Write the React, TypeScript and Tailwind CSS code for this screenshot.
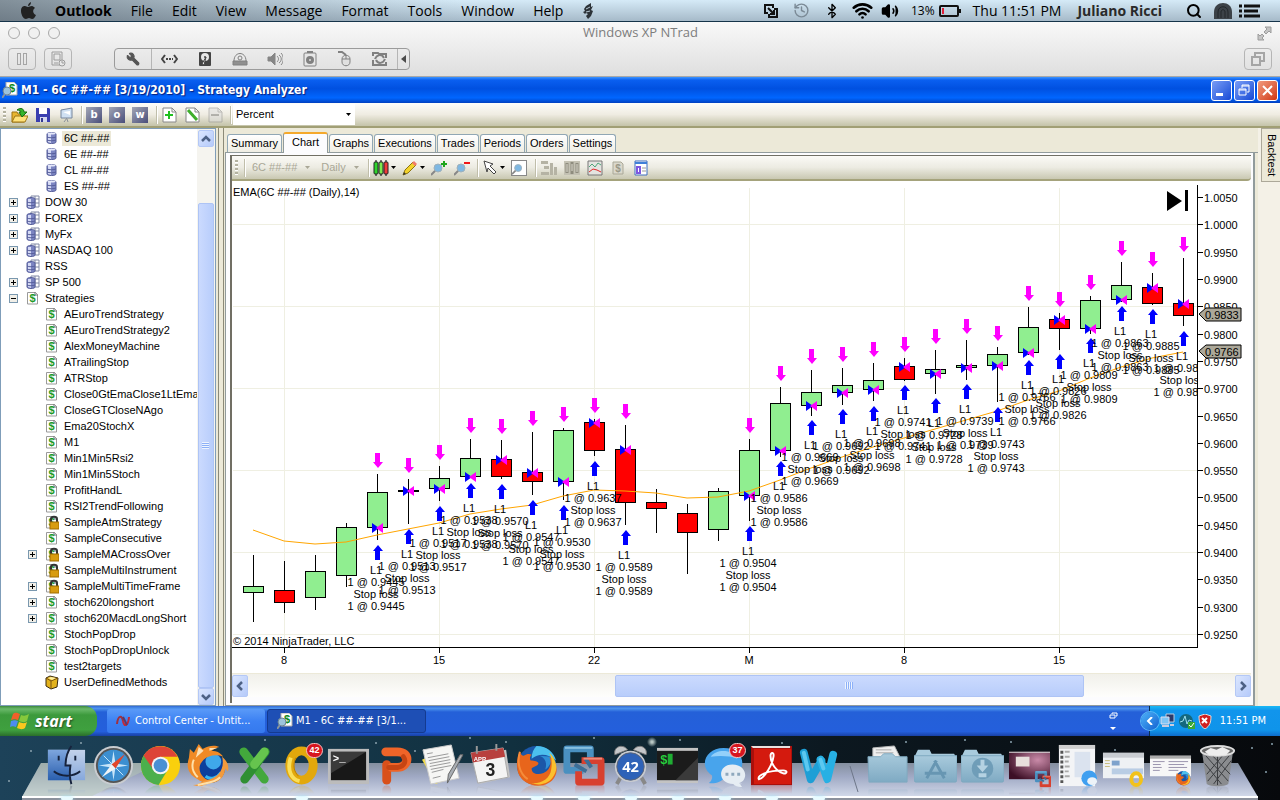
import React from 'react';
import { Bluetooth, Wifi, History, Search, Volume2, Wrench } from 'lucide-react';
import clsx from 'clsx';

type TreeIconName = 'db' | 'group' | 'doc' | 'lock' | 'box';

interface TreeRow {
  label: string;
  icon: TreeIconName;
  depth: 0 | 1;
  toggle?: '+' | '-';
  selected?: boolean;
}

const treeRows: TreeRow[] = [
  { label: '6C ##-##', icon: 'db', depth: 1, selected: true },
  { label: '6E ##-##', icon: 'db', depth: 1 },
  { label: 'CL ##-##', icon: 'db', depth: 1 },
  { label: 'ES ##-##', icon: 'db', depth: 1 },
  { label: 'DOW 30', icon: 'group', depth: 0, toggle: '+' },
  { label: 'FOREX', icon: 'group', depth: 0, toggle: '+' },
  { label: 'MyFx', icon: 'group', depth: 0, toggle: '+' },
  { label: 'NASDAQ 100', icon: 'group', depth: 0, toggle: '+' },
  { label: 'RSS', icon: 'group', depth: 0 },
  { label: 'SP 500', icon: 'group', depth: 0, toggle: '+' },
  { label: 'Strategies', icon: 'doc', depth: 0, toggle: '-' },
  { label: 'AEuroTrendStrategy', icon: 'doc', depth: 1 },
  { label: 'AEuroTrendStrategy2', icon: 'doc', depth: 1 },
  { label: 'AlexMoneyMachine', icon: 'doc', depth: 1 },
  { label: 'ATrailingStop', icon: 'doc', depth: 1 },
  { label: 'ATRStop', icon: 'doc', depth: 1 },
  { label: 'Close0GtEmaClose1LtEma', icon: 'doc', depth: 1 },
  { label: 'CloseGTCloseNAgo', icon: 'doc', depth: 1 },
  { label: 'Ema20StochX', icon: 'doc', depth: 1 },
  { label: 'M1', icon: 'doc', depth: 1 },
  { label: 'Min1Min5Rsi2', icon: 'doc', depth: 1 },
  { label: 'Min1Min5Stoch', icon: 'doc', depth: 1 },
  { label: 'ProfitHandL', icon: 'doc', depth: 1 },
  { label: 'RSI2TrendFollowing', icon: 'doc', depth: 1 },
  { label: 'SampleAtmStrategy', icon: 'lock', depth: 1 },
  { label: 'SampleConsecutive', icon: 'doc', depth: 1 },
  { label: 'SampleMACrossOver', icon: 'lock', depth: 1, toggle: '+' },
  { label: 'SampleMultiInstrument', icon: 'lock', depth: 1 },
  { label: 'SampleMultiTimeFrame', icon: 'lock', depth: 1, toggle: '+' },
  { label: 'stoch620longshort', icon: 'doc', depth: 1, toggle: '+' },
  { label: 'stoch620MacdLongShort', icon: 'doc', depth: 1, toggle: '+' },
  { label: 'StochPopDrop', icon: 'doc', depth: 1 },
  { label: 'StochPopDropUnlock', icon: 'doc', depth: 1 },
  { label: 'test2targets', icon: 'doc', depth: 1 },
  { label: 'UserDefinedMethods', icon: 'box', depth: 1 },
];

// high, low, body top, body bottom, colour, then for trades: price, sell arrow, fill, buy arrow
type Candle = [number, number, number, number, 'g' | 'r', string?, number?, number?, number?];

const candles: Candle[] = [
  [555, 622, 586, 593, 'g'],
  [561, 613, 590, 603, 'r'],
  [555, 610, 571, 598, 'g'],
  [523, 587, 527, 576, 'g'],
  [474, 540, 492, 528, 'g', '0.9445', 453, 527, 545],
  [479, 524, 490, 492, 'g', '0.9513', 458, 490, 529],
  [466, 501, 478, 489, 'g', '0.9517', 445, 488, 506],
  [439, 477, 458, 477, 'g', '0.9538', 418, 476, 483],
  [440, 479, 459, 477, 'r', '0.9570', 419, 459, 484],
  [432, 495, 472, 482, 'r', '0.9547', 411, 472, 500],
  [428, 500, 430, 482, 'g', '0.9530', 407, 481, 505],
  [419, 456, 422, 451, 'r', '0.9637', 398, 422, 461],
  [425, 525, 449, 503, 'r', '0.9589', 404, 449, 530],
  [489, 533, 502, 509, 'r'],
  [504, 574, 513, 533, 'r'],
  [488, 541, 491, 530, 'g'],
  [439, 521, 450, 496, 'g', '0.9504', 418, 495, 526],
  [387, 457, 403, 451, 'g', '0.9586', 366, 450, 461],
  [370, 416, 392, 406, 'g', '0.9669', 349, 405, 420],
  [368, 405, 385, 393, 'g', '0.9692', 347, 392, 409],
  [363, 401, 380, 390, 'g', '0.9698', 342, 389, 406],
  [358, 381, 366, 380, 'r', '0.9741', 337, 366, 385],
  [350, 394, 369, 374, 'g', '0.9728', 329, 373, 398],
  [340, 380, 365, 368, 'g', '0.9739', 319, 367, 384],
  [347, 402, 354, 366, 'g', '0.9743', 326, 365, 407],
  [307, 355, 327, 353, 'g', '0.9766', 286, 352, 360],
  [313, 350, 319, 329, 'r', '0.9826', 292, 319, 354],
  [296, 334, 300, 329, 'g', '0.9809', 275, 328, 338],
  [262, 302, 285, 300, 'g', '0.9863', 241, 299, 306],
  [273, 305, 287, 304, 'r', '0.9885', 252, 287, 309],
  [258, 326, 303, 316, 'r', '0.9855', 237, 303, 331],
];

const ema = [
  530, 541, 544, 542, 535, 529, 523, 514, 509, 505, 496, 490, 491, 493, 498, 497, 491, 480, 468, 457, 447, 438, 429,
  420, 411, 400, 391, 378, 367, 358, 352,
];

const priceLabels = [
  '1.0050', '1.0000', '0.9950', '0.9900', '0.9850', '0.9800', '0.9750', '0.9700', '0.9650', '0.9600', '0.9550',
  '0.9500', '0.9450', '0.9400', '0.9350', '0.9300', '0.9250',
];
const dateLabels = ['8', '15', '22', 'M', '8', '15'];

const candleX = (i: number) => 253 + 31 * i;

function TreeIcon({ name }: { name: TreeIconName }) {
  if (name === 'db') {
    return (
      <svg className="block" width="14" height="16" viewBox="0 0 14 16">
        <path d="M2 4c0-2 9-2 9 0v8c0 2-9 2-9 0z" fill="#7c85c2" stroke="#565e9a" />
        <path d="M3 4h3v9l-3-1z" fill="#d5daf5" />
        <path d="M2 7c2 1 7 1 9 0M2 10c2 1 7 1 9 0" stroke="#565e9a" fill="none" />
        <ellipse cx="6.500" cy="3.500" rx="4" ry="1" fill="#e5e8fa" />
      </svg>
    );
  }
  if (name === 'group') {
    return (
      <svg className="block" width="14" height="16" viewBox="0 0 14 16">
        <path d="M5 2h8v11H5z" fill="#fff" stroke="#8189a5" />
        <path d="M9 2v11M5 5h8M5 9h8" stroke="#8189a5" />
        <path d="M1 5c0-2 8-2 8 0v8c0 2-8 2-8 0z" fill="#7c85c2" stroke="#565e9a" />
        <path d="M2 5h3v9l-3-1z" fill="#d5daf5" />
        <path d="M1 8c2 1 6 1 8 0M1 11c2 1 6 1 8 0" stroke="#565e9a" fill="none" />
      </svg>
    );
  }
  if (name === 'box') {
    return (
      <svg className="block" width="14" height="16" viewBox="0 0 14 16">
        <path d="M1 4l4-2 8 2-1 9-6 2-5-3z" fill="#e3b21c" stroke="#3a2a10" />
        <path d="M1 4l5 3 7-3M6 7v8" stroke="#7a5310" fill="none" />
        <path d="M3 4l3-1 5 1-4 2z" fill="#fff0a0" />
      </svg>
    );
  }
  return (
    <svg className="block" width="14" height="16" viewBox="0 0 14 16">
      <path d="M1.500 2.500h8l2 2v9.500h-10z" fill="#fff" stroke="#9a9a9a" />
      <path d="M9 2v3h3" fill="none" stroke="#777" />
      <text x="6.500" y="12" textAnchor="middle" fontSize="11" fontWeight="700" fill="#1f9a28" fontFamily="Liberation Sans, sans-serif">
        $
      </text>
      {name === 'lock' && (
        <g>
          <path d="M6 8V5c0-3 6-3 6 0v3" fill="none" stroke="#333" strokeWidth="2" />
          <rect x="5" y="8" width="9" height="7" fill="#d89c10" stroke="#a06c00" />
        </g>
      )}
    </svg>
  );
}

function Toggle({ sign }: { sign?: '+' | '-' }) {
  if (!sign) return <span className="w-[9px] shrink-0" />;
  return (
    <button type="button" aria-label={sign === '+' ? 'Expand' : 'Collapse'} className="block shrink-0">
      <svg className="block" width="9" height="9" viewBox="0 0 9 9" shapeRendering="crispEdges">
        <rect width="9" height="9" rx="1" fill="#7a98af" />
        <rect x="1" y="1" width="7" height="7" fill="#f1efe8" />
        <rect x="2" y="4" width="5" height="1" fill="#000" />
        {sign === '+' && <rect x="4" y="2" width="1" height="5" fill="#000" />}
      </svg>
    </button>
  );
}

function ScrollButton({ dir }: { dir: 'up' | 'down' | 'left' | 'right' }) {
  const paths = { up: 'M3 9l4-4 4 4', down: 'M3 5l4 4 4-4', left: 'M9 3l-4 4 4 4', right: 'M5 3l4 4-4 4' };
  return (
    <button
      type="button"
      aria-label={`Scroll ${dir}`}
      className={clsx(
        'flex shrink-0 items-center justify-center rounded-[2px] border border-[#b4c8f6] bg-linear-to-br from-[#dbe6fe] to-[#b5cafa]',
        dir === 'up' || dir === 'down' ? 'h-[17px] w-4' : 'h-[22px] w-4',
      )}
    >
      <svg width="14" height="14" viewBox="0 0 14 14">
        <path d={paths[dir]} fill="none" stroke="#4d6185" strokeWidth="2.500" />
      </svg>
    </button>
  );
}

function Caret({ muted }: { muted?: boolean }) {
  return (
    <svg className="block shrink-0" width="5" height="3" viewBox="0 0 5 3">
      <path d="M0 0h5L2.500 3z" fill={muted ? '#a9a796' : '#000'} />
    </svg>
  );
}

function Grip() {
  return <span className="h-4 w-[3px] shrink-0 bg-[repeating-linear-gradient(#b4b2a0_0_2px,#fff_2px_3px,transparent_3px_4px)]" />;
}

function Divider() {
  return <span className="block h-[18px] w-[2px] shrink-0 border-l border-[#c0beaa] bg-white" />;
}

function MenuBar() {
  const items = ['File', 'Edit', 'View', 'Message', 'Format', 'Tools', 'Window', 'Help'];
  return (
    <header className="flex h-[22px] items-center justify-between border-b border-[#16344a] bg-[linear-gradient(to_right,#4b545c99,transparent_36%),linear-gradient(#d5eaf7,#a6bac9)] pr-5 pl-5 font-['Open_Sans','Lato',sans-serif] text-sm leading-5 text-black">
      <nav className="flex items-center gap-[19px]">
        <svg width="16" height="18" viewBox="0 0 16 18" aria-label="Apple">
          <path d="M11 0c0 2-1 4-3 4 0-2 1-3 3-4zM8 5c1 0 2-1 4-1 1 0 2 1 3 2-3 2-2 6 1 7-1 2-2 4-4 4-1 0-2-1-3-1s-2 1-3 1c-3 0-5-5-5-8 0-4 2-5 4-5 1 0 2 1 3 1z" fill="#222" />
        </svg>
        <a href="#outlook" className="font-bold">Outlook</a>
        {items.map((item) => (
          <a key={item} href={`#${item.toLowerCase()}`}>{item}</a>
        ))}
        <svg width="12" height="16" viewBox="0 0 12 16">
          <path d="M9 0L4 3 2 6l1 2-2 1 2 2 1-1 2 1-2 2 2 3 3-3 2-5-2-1 1-2 1-2-2 1z" fill="#2c3237" />
          <path d="M4 6l4-2M4 9l4-1" stroke="#b8c9d5" />
        </svg>
      </nav>
      <div className="flex items-center">
        <svg className="mr-[14px]" width="16" height="16" viewBox="0 0 16 16">
          <path d="M5 10H2V2h8v3M11 6h3v8H6v-3M5 5l6 6M11 7v4H7" fill="none" stroke="#111" strokeWidth="2" />
        </svg>
        <History className="mr-[14px] h-[17px] w-[17px] text-[#7b8a96]" strokeWidth={2} />
        <Bluetooth className="mr-3 h-4 w-4" strokeWidth={2} />
        <Wifi className="mr-2 h-[21px] w-[21px]" strokeWidth={3} />
        <Volume2 className="mr-3 h-[18px] w-[18px] fill-black" strokeWidth={2} />
        <span className="mr-1 text-xs">13%</span>
        <svg className="mr-3 block" width="22" height="12" viewBox="0 0 22 12">
          <rect x="1" y="1" width="18" height="10" rx="1" fill="none" stroke="#111" strokeWidth="2" />
          <path d="M20 4h2v4h-2z" fill="#111" />
          <path d="M3 3h2v6H3z" fill="#e0203a" />
        </svg>
        <span className="mr-4">Thu 11:51 PM</span>
        <span className="mr-6 font-bold text-[#2a2a2a]">Juliano Ricci</span>
        <Search className="mr-3 h-4 w-4" strokeWidth={3} />
        <svg className="mr-[7px]" width="18" height="16" viewBox="0 0 18 16">
          <path d="M0 16V9c0-12 18-12 18 0v7z" fill="#3c4248" />
          <path d="M4 15V9c0-7 10-7 10 0v6M7 15V9c0-3 4-3 4 0v6" fill="none" stroke="#22272b" />
        </svg>
        <svg width="21" height="14" viewBox="0 0 21 14">
          <path d="M0 2h3M0 7h3M0 12h3M5 2h16M5 7h14M5 12h16" stroke="#111" strokeWidth="3" />
        </svg>
      </div>
    </header>
  );
}

const vmDevices: { name: string; art: React.ReactNode }[] = [
  {
    name: 'Hard disk',
    art: (
      <g>
        <rect x="2" y="1" width="12" height="14" rx="1" fill="#444" />
        <circle cx="8" cy="6" r="4" fill="#e6e6e6" />
        <path d="M9 6l-4 7 2 1z" fill="#fff" stroke="#444" />
        <circle cx="8" cy="6" r="1" fill="#444" />
      </g>
    ),
  },
  {
    name: 'CD/DVD',
    art: (
      <g fill="none" stroke="#808080">
        <path d="M2 10C2 0 14 0 14 10" fill="#e9e9e9" />
        <circle cx="8" cy="7" r="2" />
        <path d="M1 10h14v4H1z" fill="#909090" />
      </g>
    ),
  },
  {
    name: 'Sound',
    art: (
      <g fill="none" stroke="#868686">
        <path d="M1 6h3l4-4v12l-4-4H1z" fill="#868686" />
        <path d="M10 5c2 2 2 4 0 6M12 4c3 2 3 6 0 8M14 2c3 3 3 9 0 12" />
      </g>
    ),
  },
  {
    name: 'Camera',
    art: (
      <g>
        <rect x="2" y="2" width="12" height="13" rx="1" fill="#e6e6e6" stroke="#808080" />
        <path d="M5 1h6" stroke="#808080" strokeWidth="2" />
        <circle cx="8" cy="9" r="4" fill="#808080" />
        <circle cx="8" cy="9" r="1" fill="#ddd" />
      </g>
    ),
  },
  {
    name: 'Mouse',
    art: (
      <g fill="none" stroke="#808080">
        <path d="M1 1h4l4 3" strokeWidth="2" />
        <path d="M5 8c0-5 8-5 8 0v3c0 5-8 5-8 0z" fill="#e0e0e0" />
        <path d="M5 8h8M9 4v4" />
      </g>
    ),
  },
  {
    name: 'Shared folders',
    art: (
      <g fill="none" stroke="#808080">
        <path d="M1 5V2h5l1 1h7v4M1 9v5h13v-3" strokeWidth="2" />
        <path d="M3 8c2-5 7-5 9-1M13 8c-2 5-7 5-9 1" strokeWidth="2" />
      </g>
    ),
  },
];

function VmChrome() {
  return (
    <section className="bg-linear-to-b from-[#f9f9f9] to-[#dedede]">
      <div className="flex h-[22px] items-center justify-between px-2">
        <div className="flex gap-2">
          {['Close', 'Minimize', 'Zoom'].map((name) => (
            <button key={name} type="button" aria-label={name} className="h-3 w-3 rounded-full border border-[#a9a9a9] bg-[#f0f0f0]" />
          ))}
        </div>
        <h1 className="font-['Open_Sans','Lato',sans-serif] text-[13px] text-[#7d7d7d]">Windows XP NTrad</h1>
        <svg className="ml-9" width="15" height="15" viewBox="0 0 15 15">
          <path d="M8 1h6v6l-2-2-3 3-2-2 3-3zM1 8l2 2 2-2 2 2-2 2 2 2H1z" fill="#c4c4c4" stroke="#9c9c9c" />
        </svg>
      </div>
      <div className="flex h-[33px] items-start gap-2 border-b border-[#a8a8a8] px-2 pt-1">
        <button type="button" aria-label="Pause" className="flex h-[22px] w-7 items-center justify-center gap-[2px] rounded border border-[#b5b5b5]">
          <span className="h-3 w-1 border border-[#a5a5a5]" />
          <span className="h-3 w-1 border border-[#a5a5a5]" />
        </button>
        <button type="button" aria-label="Snapshot" className="flex h-[22px] w-7 items-center justify-center rounded border border-[#b5b5b5]">
          <svg width="16" height="16" viewBox="0 0 16 16" fill="none" stroke="#9c9c9c">
            <path d="M2 1h10v13H2zM4 3h6v6H4zM4 12h4" />
            <circle cx="12" cy="12" r="3" fill="#e8e8e8" />
            <path d="M12 10v2h2" />
          </svg>
        </button>
        <div className="ml-[34px] flex h-[22px] items-center rounded border border-[#9b9b9b]">
          <button type="button" aria-label="Settings" className="flex h-5 w-[37px] items-center justify-center border-r border-[#b5b5b5]">
            <Wrench className="h-[14px] w-[14px] -scale-x-100 fill-[#555] text-[#555]" />
          </button>
          <button type="button" aria-label="Network" className="flex h-5 w-[35px] items-center justify-center">
            <svg width="17" height="10" viewBox="0 0 17 10">
              <path d="M4 1L1 5l3 4M13 1l3 4-3 4" fill="none" stroke="#444" strokeWidth="2" />
              <path d="M5 5h2M8 5h2M11 5h1" stroke="#444" strokeWidth="2" />
            </svg>
          </button>
          {vmDevices.map((device) => (
            <button key={device.name} type="button" aria-label={device.name} className="flex h-5 w-[35px] items-center justify-center">
              <svg width="16" height="16" viewBox="0 0 16 16">{device.art}</svg>
            </button>
          ))}
          <button type="button" aria-label="Hide devices" className="flex h-5 w-3 items-center justify-center border-l border-[#b5b5b5]">
            <svg width="5" height="8" viewBox="0 0 5 8"><path d="M5 0v8L0 4z" fill="#4b4b4b" /></svg>
          </button>
        </div>
        <button type="button" aria-label="Unity" className="ml-auto flex h-[22px] w-7 items-center justify-center rounded border border-[#b5b5b5]">
          <svg width="14" height="14" viewBox="0 0 14 14" fill="none" stroke="#a5a5a5" strokeWidth="2">
            <path d="M1 5h8v8H1zM4 4V1h9v8H9" />
          </svg>
        </button>
      </div>
    </section>
  );
}

function SearchDocIcon() {
  return (
    <svg className="block shrink-0" width="16" height="16" viewBox="0 0 16 16">
      <path d="M4 0h8l3 3v10H4z" fill="#fff" stroke="#aaa" />
      <text x="10" y="10" textAnchor="middle" fontSize="11" fontWeight="700" fill="#0f8a1c" fontFamily="Liberation Sans, sans-serif">$</text>
      <circle cx="5" cy="9" r="4" fill="#9cc3dc" stroke="#6d8494" />
      <path d="M3 12l-3 4" stroke="#8a959c" strokeWidth="2" />
    </svg>
  );
}

function TitleBar() {
  return (
    <div className="flex h-[26px] items-center justify-between bg-[linear-gradient(#3c94ff,#0a5ff0_12%,#0050e0_45%,#0066ff_80%,#0040c0)] pr-[2px] pl-[2px]">
      <div className="flex items-center gap-[3px]">
        <SearchDocIcon />
        <h2 className="font-['DejaVu_Sans_Condensed','DejaVu_Sans',sans-serif] text-xs font-bold text-white [text-shadow:1px_1px_1px_#0a1f7a]">
          M1 - 6C ##-## [3/19/2010] - Strategy Analyzer
        </h2>
      </div>
      <div className="flex gap-[2px]">
        <button type="button" aria-label="Minimize" className="h-[21px] w-[21px] rounded-[3px] border border-white bg-linear-to-br from-[#7a9cf5] to-[#1747d5]">
          <svg viewBox="0 0 19 19"><path d="M4 12h7v3H4z" fill="#fff" /></svg>
        </button>
        <button type="button" aria-label="Restore" className="h-[21px] w-[21px] rounded-[3px] border border-white bg-linear-to-br from-[#7a9cf5] to-[#1747d5]">
          <svg viewBox="0 0 19 19" fill="none" stroke="#fff"><path d="M4 8h7v6H4zM4 9h7M7 7V4h7v7h-2M7 5h7" /></svg>
        </button>
        <button type="button" aria-label="Close" className="h-[21px] w-[21px] rounded-[3px] border border-white bg-linear-to-br from-[#f09a7c] to-[#cf3208]">
          <svg viewBox="0 0 19 19"><path d="M5 5l9 9M14 5l-9 9" stroke="#fff" strokeWidth="2" /></svg>
        </button>
      </div>
    </div>
  );
}

function LetterButton({ letter }: { letter: string }) {
  return (
    <button type="button" className="flex h-4 w-4 items-center justify-center bg-linear-to-br from-[#a4a7b5] to-[#4a4e7a] pb-px font-['DejaVu_Sans_Condensed',sans-serif] text-[11px] leading-none font-bold text-white">
      {letter}
    </button>
  );
}

function AppToolbar() {
  return (
    <div className="flex h-[25px] items-center border-b-2 border-[#a19f75] bg-linear-to-b from-[#fdfdfa] via-[#efece2] to-[#c4c3a9] pl-[3px]">
      <Grip />
      <div className="mr-[7px] ml-[5px] flex items-center gap-2">
        <button type="button" aria-label="Open">
          <svg className="block" width="17" height="16" viewBox="0 0 17 16">
            <path d="M1 5h5l1 2h6v8H1z" fill="#e8b530" stroke="#9c7414" />
            <path d="M4 9h13l-3 6H1z" fill="#ffe27a" stroke="#9c7414" />
            <path d="M6 3c4-3 7-1 7 2h3l-5 5-3-5h2c0-1-2-2-4-2z" fill="#35b52c" stroke="#187010" />
          </svg>
        </button>
        <button type="button" aria-label="Save">
          <svg className="block" width="14" height="14" viewBox="0 0 14 14">
            <path d="M0 0h13l1 1v13H0z" fill="#3a3fb0" />
            <path d="M3 0h8v6H3z" fill="#fff" />
            <path d="M4 9h7v5H4z" fill="#d5d8ee" />
            <path d="M5 10h2v4H5z" fill="#333a90" />
          </svg>
        </button>
        <button type="button" aria-label="Display">
          <svg className="block" width="16" height="16" viewBox="0 0 16 16">
            <path d="M3 3l11-2v10L3 11z" fill="#cfe0f2" stroke="#76869c" />
            <path d="M5 5l7-1v4z" fill="#fff" />
            <path d="M9 11l-3 4M9 12l1 3" stroke="#8a9098" fill="none" />
          </svg>
        </button>
      </div>
      <Divider />
      <div className="mr-2 ml-[3px] flex gap-[7px]">
        <LetterButton letter="b" />
        <LetterButton letter="o" />
        <LetterButton letter="w" />
      </div>
      <Divider />
      <div className="mr-[6px] ml-1 flex gap-[7px]">
        {['plus', 'edit', 'minus'].map((kind) => (
          <button key={kind} type="button" aria-label={kind} className={clsx(kind === 'minus' && 'opacity-50')}>
            <svg className="block" width="16" height="16" viewBox="0 0 16 16">
              <path d="M1 1h9l4 4v10H1z" fill={kind === 'minus' ? '#ddd' : '#fff'} stroke="#888" />
              <path d="M10 1v4h4" fill="none" stroke="#888" />
              {kind === 'plus' && <path d="M7 4v8M3 8h8" stroke="#20c020" strokeWidth="2" />}
              {kind === 'edit' && <path d="M3 3l9 10" stroke="#3fae2c" strokeWidth="3" />}
              {kind === 'minus' && <path d="M3 8h8" stroke="#777" strokeWidth="2" />}
            </svg>
          </button>
        ))}
      </div>
      <Divider />
      <div className="relative ml-px">
        <select aria-label="Display units" className="block h-[21px] w-[122px] appearance-none bg-white pl-[3px] font-['Liberation_Sans',sans-serif] text-[11px] text-black">
          <option>Percent</option>
        </select>
        <span className="pointer-events-none absolute top-[9px] right-1"><Caret /></span>
      </div>
    </div>
  );
}

function StrategyTree() {
  return (
    <aside className="flex w-[216px] shrink-0 border border-[#7f9db9] bg-white">
      <ul className="min-w-0 flex-1 pt-px">
        {treeRows.map((row) => (
          <li
            key={row.label}
            className={clsx('flex h-4 items-center text-[11px] leading-none', row.depth === 0 ? 'pl-2' : 'pl-[27px]')}
          >
            <Toggle sign={row.toggle} />
            <span className="mr-[3px] ml-2 shrink-0"><TreeIcon name={row.icon} /></span>
            <span className={clsx('px-[2px] py-[2px] whitespace-nowrap', row.selected && 'bg-[#ece9d8]')}>{row.label}</span>
          </li>
        ))}
      </ul>
      <div className="flex w-[18px] shrink-0 flex-col items-center bg-[#f5f4ef] pt-px pr-px">
        <ScrollButton dir="up" />
        <div className="h-14" />
        <div className="flex w-4 flex-1 items-center justify-center rounded-[2px] border border-[#aec4f5] bg-linear-to-r from-[#cbdafe] to-[#b8cdfb]">
          <span className="h-[7px] w-[7px] bg-[repeating-linear-gradient(#eef4fe_0_1px,#8cb0f8_1px_2px)]" />
        </div>
        <ScrollButton dir="down" />
      </div>
    </aside>
  );
}

function Tabs() {
  const tabs = ['Summary', 'Chart', 'Graphs', 'Executions', 'Trades', 'Periods', 'Orders', 'Settings'];
  return (
    <div role="tablist" className="flex h-[22px] items-end gap-px border-b border-[#919b9c] pl-[2px] text-[11px] leading-none">
      {tabs.map((tab) => (
        <button
          key={tab}
          type="button"
          role="tab"
          aria-selected={tab === 'Chart'}
          className={clsx(
            'rounded-t-[3px] border-x whitespace-nowrap',
            tab === 'Chart'
              ? '-mb-px h-[21px] border-t-2 border-x-[#919b9c] border-t-[#f5a92b] bg-[#fcfcfe] px-2 pb-[2px]'
              : 'h-[18px] border-t border-[#91a7b4] bg-linear-to-b from-white to-[#efede3] px-[3px]',
          )}
        >
          {tab}
        </button>
      ))}
    </div>
  );
}

function Magnifier({ mark }: { mark?: '+' | '-' }) {
  return (
    <svg className="block" width="16" height="16" viewBox="0 0 16 16">
      <circle cx="7" cy="8" r="4" fill="#7fb8e2" stroke="#9fb0ba" />
      <path d="M4 11l-4 4" stroke="#888" strokeWidth="2" />
      {mark === '+' && <path d="M13 1v6M10 4h6" stroke="#1fa51c" strokeWidth="2" />}
      {mark === '-' && <path d="M10 3h6" stroke="#f01818" strokeWidth="2" />}
    </svg>
  );
}

function ChartToolbar() {
  return (
    <div className="flex h-[26px] shrink-0 items-center rounded-br border-t border-b-2 border-t-[#716f64] border-b-[#a5a37c] bg-linear-to-b from-[#fbfaf6] via-[#ecebe2] to-[#c9c8b2] pl-[3px] text-[11px] text-[#a9a796]">
      <Grip />
      <div className="mr-[6px] ml-[6px]"><Divider /></div>
      <button type="button" className="flex items-center gap-2">6C ##-## <Caret muted /></button>
      <button type="button" className="ml-[11px] flex items-center gap-2">Daily <Caret muted /></button>
      <div className="mr-[3px] ml-[9px]"><Divider /></div>
      <button type="button" aria-label="Chart style" className="flex items-center gap-[2px]">
        <svg className="block" width="16" height="16" viewBox="0 0 16 16">
          <path d="M3 0v16M8 0v16M13 0v16" stroke="#000" />
          <rect x="1" y="2" width="4" height="12" rx="1" fill="#2fd42c" stroke="#222" />
          <rect x="6" y="2" width="4" height="12" rx="1" fill="#7dea50" stroke="#222" />
          <rect x="11" y="2" width="4" height="12" rx="1" fill="#f03a3a" stroke="#222" />
        </svg>
        <Caret />
      </button>
      <button type="button" aria-label="Draw" className="ml-[6px] flex items-center gap-[2px]">
        <svg className="block" width="16" height="16" viewBox="0 0 16 16">
          <path d="M1 15l2-5 8-8 3 3-8 8z" fill="#f3d32c" stroke="#8c7410" />
          <path d="M10 3l2-2 3 3-2 2z" fill="#f07a6a" />
          <path d="M1 15l1-3 2 2z" fill="#333" />
        </svg>
        <Caret />
      </button>
      <div className="ml-[6px] flex gap-[7px]">
        <button type="button" aria-label="Zoom in"><Magnifier mark="+" /></button>
        <button type="button" aria-label="Zoom out"><Magnifier mark="-" /></button>
      </div>
      <div className="mr-1 ml-[7px]"><Divider /></div>
      <button type="button" aria-label="Pointer" className="flex items-center gap-[3px]">
        <svg className="block" width="14" height="15" viewBox="0 0 14 15">
          <path d="M1 1l9 3-3 2 6 6-2 2-6-6-1 4z" fill="#fff" stroke="#444" />
        </svg>
        <Caret />
      </button>
      <button type="button" aria-label="Data box" className="ml-[6px] flex h-4 w-4 items-center justify-center border border-[#888] bg-white">
        <Magnifier />
      </button>
      <div className="mr-1 ml-2"><Divider /></div>
      <div className="flex items-center gap-[7px]">
        <button type="button" aria-label="Order entry">
          <svg className="block" width="16" height="16" viewBox="0 0 16 16" fill="#b5b3a4"><path d="M0 1h7v3H0zM3 6h5v3H3zM0 12h8v3H0zM9 3h3v12H9zM13 7h3v8h-3z" /></svg>
        </button>
        <button type="button" aria-label="Trader">
          <svg className="block" width="16" height="16" viewBox="0 0 16 16"><path d="M0 1h16v14H0z" fill="#c3c1b3" /><path d="M3 3v10M8 2v12M13 3v10" stroke="#8e8c7e" strokeWidth="3" /><path d="M3 4v8M8 4v7M13 4v8" stroke="#dddbd0" /></svg>
        </button>
        <button type="button" aria-label="Indicators">
          <svg className="block" width="16" height="16" viewBox="0 0 16 16"><path d="M1 1h14v14H1z" fill="#e4e4e0" stroke="#777" /><path d="M2 7l3-3 3 3 3-4 3 2" fill="none" stroke="#4fa67a" /><path d="M2 12l4-3 4 1 4 2" fill="none" stroke="#e02a2a" /></svg>
        </button>
        <button type="button" aria-label="Strategies">
          <svg className="block" width="16" height="16" viewBox="0 0 16 16"><path d="M3 2h8l2 2v10H3z" fill="#dad8cc" stroke="#aaa897" /><text x="8" y="12" fontSize="10" fontWeight="700" textAnchor="middle" fill="#9a9888">$</text></svg>
        </button>
        <button type="button" aria-label="Properties">
          <svg className="block" width="16" height="16" viewBox="0 0 16 16"><path d="M2 1h12v14H2z" fill="#fff" stroke="#3f6fc0" /><path d="M2 2h12v2H2z" fill="#3f80d8" /><path d="M4 7h3v6H4z" fill="none" stroke="#7d57e0" strokeWidth="2" /><path d="M9 8h4M9 11h4" stroke="#999" /></svg>
        </button>
      </div>
    </div>
  );
}

function PriceTag({ y, label }: { y: number; label: string }) {
  return (
    <g>
      <path d={`M1199 ${y}l7-6h35v13h-35z`} fill="#aca899" stroke="#000" />
      <text x="1205" y={y + 5}>{label}</text>
    </g>
  );
}

function CandleChart() {
  const emaPath = ema.map((y, i) => `${candleX(i)},${y}`).join(' ');
  return (
    <svg className="block h-[492px] w-full bg-white" role="img" aria-label="EMA(6C ##-## (Daily),14)">
      <defs>
        <clipPath id="plot">
          <rect x="232" y="184" width="965" height="463" />
        </clipPath>
      </defs>
      <g transform="translate(-232,-181)" fontFamily="Liberation Sans, Arial, sans-serif" fontSize="11" fill="#000">
        <g fill="#efefe2" shapeRendering="crispEdges">
          {[224, 306, 388, 470, 552, 634].map((y) => (
            <rect key={y} x="233" y={y} width="964" height="1" />
          ))}
          {dateLabels.map((_, i) => (
            <rect key={i} x={284 + 155 * i} y="188" width="1" height="459" />
          ))}
        </g>

        <g clipPath="url(#plot)">
          <g shapeRendering="crispEdges">
            {candles.map(([high, low, top, bottom, color], i) => (
              <g key={i}>
                <rect x={candleX(i)} y={high} width="1" height={low - high} />
                <rect x={candleX(i) - 10} y={top} width="21" height={bottom - top} />
                {bottom - top > 2 && (
                  <rect x={candleX(i) - 9} y={top + 1} width="19" height={bottom - top - 2} fill={color === 'g' ? '#90ee90' : '#ff0000'} />
                )}
              </g>
            ))}
          </g>
          <polyline points={emaPath} fill="none" stroke="#ffa500" strokeWidth="1" />
          {candles.map(([, , , , , price, sell, fill, buy], i) => {
            if (!price || !sell || !fill || !buy) return null;
            const x = candleX(i);
            return (
              <g key={i} textAnchor="middle">
                <path d={`M${x - 2} ${sell}h5v9h3l-5 6l-5-6h2z`} fill="#ff00ff" />
                <path d={`M${x - 2} ${buy + 15}h5v-9h3l-5-6l-5 6h2z`} fill="#0000ff" />
                <path d={`M${x - 5} ${fill - 4}l7 5l-7 5z`} fill="#0000ff" />
                <path d={`M${x + 6} ${fill - 4}l-7 5l7 5z`} fill="#ff00ff" />
                <text x={x - 1} y={buy + 29}>L1</text>
                <text x={x - 1} y={buy + 41}>1 @ {price}</text>
                <text x={x - 1} y={buy + 53}>Stop loss</text>
                <text x={x - 1} y={buy + 65}>1 @ {price}</text>
              </g>
            );
          })}
        </g>

        <g shapeRendering="crispEdges">
          <rect x="1197" y="185" width="1" height="463" />
          <rect x="232" y="647" width="966" height="1" />
        </g>
        {priceLabels.map((label, i) => {
          const y = 197 + Math.round((i * 437) / 16);
          return (
            <g key={label}>
              <rect x="1198" y={y} width="5" height="1" />
              <text x="1204" y={y + 5}>{label}</text>
            </g>
          );
        })}
        {dateLabels.map((label, i) => (
          <g key={i}>
            <rect x={284 + 155 * i} y="648" width="1" height="5" />
            <text x={284 + 155 * i} y="664" textAnchor="middle">{label}</text>
          </g>
        ))}
        <PriceTag y={314} label="0.9833" />
        <PriceTag y={351} label="0.9766" />
        <text x="233" y="196">EMA(6C ##-## (Daily),14)</text>
        <text x="233" y="645">© 2014 NinjaTrader, LLC</text>
        <path d="M1167 191v20l15-10zM1185 190h3v21h-3z" />
      </g>
    </svg>
  );
}

function ChartPanel() {
  return (
    <main className="flex min-w-0 flex-1 flex-col bg-[#ece9d8] pt-[3px]">
      <Tabs />
      <div className="mr-[3px] flex flex-1 flex-col border-r-2 border-b border-l border-[#919b9c] bg-[#fcfcfe] pt-[2px] pr-[2px] pb-[2px] pl-1">
        <div className="flex flex-1 flex-col border-l-2 border-[#716f64]">
          <ChartToolbar />
          <CandleChart />
          <div className="flex h-6 shrink-0 items-center border-t border-[#ece9d8] bg-linear-to-b from-[#f1f0ea] to-[#fefefc]">
            <ScrollButton dir="left" />
            <div className="w-[36%] shrink-0" />
            <div className="flex h-[22px] w-[46%] items-center justify-center rounded-[2px] border border-[#aec4f5] bg-linear-to-b from-[#cbdafe] to-[#b8cdfb]">
              <span className="h-[7px] w-2 bg-[repeating-linear-gradient(to_right,#eef4fe_0_1px,#8cb0f8_1px_2px)]" />
            </div>
            <div className="flex-1" />
            <ScrollButton dir="right" />
          </div>
        </div>
      </div>
    </main>
  );
}

function Taskbar() {
  return (
    <footer className="flex h-[30px] items-center bg-[linear-gradient(#3168d5,#4e95ee_8%,#2460d8_20%,#245fdc_85%,#1941a5)] font-['DejaVu_Sans_Condensed','DejaVu_Sans',sans-serif] text-[11px] text-white">
      <button
        type="button"
        className="flex h-full w-[97px] items-center gap-[5px] rounded-r-xl bg-[linear-gradient(#3d8a3d,#6ab96a_10%,#3c9a3c_30%,#3fa03f_80%,#2a6e2a)] pl-[10px] font-['Open_Sans',sans-serif] text-base leading-none font-bold italic [text-shadow:1px_1px_2px_#234d23]"
      >
        <svg width="20" height="18" viewBox="0 0 20 18">
          <path d="M3 2c2-2 4-1 7 0L8 8C5 7 4 7 1 8z" fill="#f0602a" />
          <path d="M11 3c3 1 4 1 8-1l-2 7c-3 2-5 1-8 0z" fill="#86c83c" />
          <path d="M1 9c3-1 4-1 7 0l-2 6c-3-1-4-1-6 0z" fill="#4d8cf0" />
          <path d="M9 10c3 1 5 2 8 0l-2 6c-3 2-5 1-8 0z" fill="#fbc71e" />
        </svg>
        <span className="pb-px">start</span>
      </button>
      <div className="ml-[10px] flex gap-[2px]">
        <button type="button" className="flex h-6 w-[158px] items-center gap-1 rounded-[3px] bg-linear-to-b from-[#5a9af8] via-[#3c81f3] to-[#3579ee] pl-[9px]">
          <svg width="15" height="12" viewBox="0 0 15 12" fill="none" strokeWidth="2">
            <path d="M1 9c1-9 5-9 6-3" stroke="#a03040" />
            <path d="M7 6c1 6 5 6 6-4" stroke="#c22838" />
            <path d="M7 2l4 8" stroke="#5a3a6a" />
          </svg>
          Control Center - Untit...
        </button>
        <button type="button" className="flex h-6 w-[159px] items-center gap-[3px] rounded-[3px] border border-[#143a90] bg-[#1e4fb5] pl-[9px]">
          <SearchDocIcon />
          M1 - 6C ##-## [3/1...
        </button>
      </div>
      <div className="mr-[31px] ml-auto flex flex-col items-center gap-2">
        <svg width="9" height="7" viewBox="0 0 9 7" fill="none" stroke="#fff"><path d="M1 3h5v3H1zM3 2V1h5v3H7" /></svg>
        <svg width="6" height="3" viewBox="0 0 6 3"><path d="M0 0h6L3 3z" fill="#fff" /></svg>
      </div>
      <div className="flex h-full items-center border-l border-[#092e51] bg-[linear-gradient(#18b9f5,#1195ec_15%,#0f94ea_80%,#0e6ccb)] pr-[14px]">
        <button type="button" aria-label="Show hidden icons" className="-ml-[9px] flex h-[18px] w-[18px] items-center justify-center rounded-full bg-linear-to-br from-[#4fb2f8] to-[#1460d0] ring-1 ring-[#5cb9f5]">
          <svg width="8" height="8" viewBox="0 0 8 8"><path d="M6 0L2 4l4 4" fill="none" stroke="#fff" strokeWidth="2" /></svg>
        </button>
        <svg className="ml-px" width="16" height="16" viewBox="0 0 16 16">
          <path d="M6 1h8v8H6z" fill="#2b3a6a" stroke="#bcd" />
          <path d="M1 4h8v7H1z" fill="#7fc5f5" stroke="#dde" />
          <path d="M2 13h7M10 12h4" stroke="#ccd" strokeWidth="2" />
        </svg>
        <svg className="ml-[3px]" width="16" height="16" viewBox="0 0 16 16">
          <circle cx="7" cy="8" r="7" fill="#14687e" />
          <path d="M1 9l3-1 2-5 2 8 2-4 3 1" fill="none" stroke="#9fe0ee" />
          <path d="M9 9h7v7H9z" fill="#39a935" />
          <path d="M10 12l2 2 3-4" fill="none" stroke="#fff" />
        </svg>
        <svg className="ml-[3px]" width="14" height="15" viewBox="0 0 14 15">
          <path d="M7 0l6 2c0 6-1 10-6 13C2 12 1 8 1 2z" fill="#d22020" stroke="#ddd" />
          <path d="M4 4l5 5M9 4L4 9" stroke="#fff" strokeWidth="2" />
        </svg>
        <span className="ml-2">11:51 PM</span>
      </div>
    </footer>
  );
}

function Badge({ count }: { count: string }) {
  return (
    <span className="absolute -top-px right-[2px] flex h-[15px] w-[17px] items-center justify-center rounded-full border border-[#f3c3c3] bg-[#d8151f] font-['Liberation_Sans',sans-serif] text-[9px] leading-none font-bold text-white">
      {count}
    </span>
  );
}

function FoxMark() {
  return (
    <g>
      <circle cx="22" cy="22" r="20" fill="#1b57a8" />
      <path d="M22 2c10 0 18 6 20 15-8-7-17-8-25-2 0-6 2-10 5-13z" fill="#4cc0ee" />
      <path d="M25 12c6 2 8 7 6 14 5-3 7-9 6-13z" fill="#2f8fd6" />
      <path d="M5 8c1 3 2 4 4 4 3-2 6-2 8-1-2 2-2 4-1 6 4 0 8 1 8 3-1 3-5 3-7 5 0 8 12 7 17 1 3-4 3-9 1-13 8 6 9 14 6 20C34 47 9 46 3 29 1 21 2 13 5 8z" fill="#e8651b" />
      <path d="M35 9c8 7 10 18 3 26-5 6-14 8-21 5 10 1 19-5 20-14 1-6 1-11-2-17z" fill="#fbc02d" />
      <path d="M5 8c-3 10-1 22 8 28" fill="none" stroke="#f58b3a" strokeWidth="2" />
    </g>
  );
}

function FusionMark() {
  return (
    <g fill="none" strokeLinejoin="round">
      <path d="M22 27H5V5h24v12" stroke="#4a90c0" strokeWidth="7" />
      <path d="M20 17h20v22H17V28" stroke="#d8402f" strokeWidth="7" />
      <path d="M13 21l12 7M24 15l6 9" stroke="#3d6e96" strokeWidth="4" />
      <path d="M3 4h28" stroke="#86bfe0" strokeWidth="2" />
      <path d="M22 15h19" stroke="#f08a78" strokeWidth="2" />
    </g>
  );
}

function Folder({ children }: { children?: React.ReactNode }) {
  return (
    <svg className="block" viewBox="0 0 44 44">
      <path d="M1 12l3-6h12l2 4h23l2 3v24H1z" fill="#a9cbdd" />
      <path d="M0 12h44v25c0 1-1 2-2 2H2c-1 0-2-1-2-2z" fill="url(#folderFill)" stroke="#7fa9c0" />
      {children}
    </svg>
  );
}

const dockApps: { name: string; badge?: string; running?: boolean; art: React.ReactNode }[] = [
  {
    name: 'Finder',
    running: true,
    art: (
      <g>
        <rect x="3" y="6" width="38" height="31" fill="url(#finderLight)" />
        <path d="M3 6h22c-3 6-4 12-4 16h5v15H3z" fill="url(#finderDark)" />
        <path d="M27 2c-5 7-6 13-6 20h5c-1 7-1 13 1 19M9 28c7 6 20 6 27 0M14 12v5M31 12v5" fill="none" stroke="#16223c" strokeWidth="2" />
      </g>
    ),
  },
  {
    name: 'Safari',
    art: (
      <g>
        <circle cx="22" cy="22" r="20" fill="#c9ccd0" />
        <circle cx="22" cy="22" r="18" fill="#555" />
        <circle cx="22" cy="22" r="16" fill="#3c8fd0" />
        <path d="M22 7l2 13 13 2-13 2-2 13-2-13-13-2 13-2z" fill="#c8e6fa" />
        <path d="M12 12l9 9M32 32l-9-9" stroke="#c8e6fa" />
        <path d="M34 10L24 25l-4-4z" fill="#e2462a" />
        <path d="M10 34l10-13 4 4z" fill="#f1f4f6" />
      </g>
    ),
  },
  {
    name: 'Chrome',
    art: (
      <g>
        <circle cx="22" cy="22" r="20" fill="#f9d00d" />
        <path d="M22 22L4.700 12A20 20 0 0 0 20 42l9-15z" fill="#4caf4c" />
        <path d="M4.700 12A20 20 0 0 1 39.500 13H22l-8 12z" fill="#dd4437" />
        <circle cx="22" cy="22" r="9" fill="#f4f4f4" />
        <circle cx="22" cy="22" r="7" fill="#4a90d4" />
      </g>
    ),
  },
  {
    name: 'Fluid Fox',
    art: (
      <g>
        <circle cx="24" cy="24" r="16" fill="#0c3f9c" />
        <circle cx="28" cy="18" r="8" fill="#3fa8ea" />
        <path d="M20 33c5 4 12 2 16-4" fill="none" stroke="#36b6f2" strokeWidth="3" />
        <path d="M13 0l4 5c7-4 13-4 17-2-5 1-6 3-8 4 6 0 10 3 12 6-8-3-15-1-20 3-6 6-5 13 0 18 3 3 7 4 11 3-5 3-13 3-17-1C2 31 0 23 3 14l1-9 4 4z" fill="#f08a26" />
        <path d="M37 13c5 4 7 9 6 15l-3-3c0 9-7 14-14 15-5 1-8 2-10 3l-9 0c6-1 8-5 14-6 12-2 19-11 16-24z" fill="#f39a3c" />
        <path d="M13 3l5 4-8 7zM24 4l8 0-8 3z" fill="#fce0b4" />
        <path d="M8 16c-3 7-1 13 4 18M12 42c8-2 17-2 23-8" fill="none" stroke="#ffe0a8" strokeWidth="2" />
      </g>
    ),
  },
  {
    name: 'Excel',
    art: (
      <g strokeLinecap="round" strokeWidth="9">
        <path d="M11 8l21 28" stroke="#43a83c" />
        <path d="M33 8L12 36" stroke="#2f8f33" />
        <path d="M32 8L22 21" stroke="#66c44e" />
      </g>
    ),
  },
  {
    name: 'Outlook',
    badge: '42',
    running: true,
    art: (
      <g fill="none">
        <ellipse cx="22" cy="22" rx="12" ry="15" stroke="#e2a80c" strokeWidth="9" />
        <path d="M11 14c-4 12 0 22 9 24" stroke="#fbe05a" strokeWidth="4" />
        <path d="M16 14c-3 8-2 14 3 19" stroke="#b97c06" />
      </g>
    ),
  },
  {
    name: 'Terminal',
    art: (
      <g>
        <rect x="1" y="5" width="42" height="36" fill="#bcbcbc" />
        <rect x="4" y="8" width="36" height="29" fill="#181818" />
        <path d="M4 8h36L4 30z" fill="#3a3a3a" />
        <text x="6" y="18" fontSize="11" fontWeight="700" fill="#fff" fontFamily="Liberation Mono, monospace">&gt;_</text>
      </g>
    ),
  },
  {
    name: 'PowerPoint',
    art: (
      <g fill="none" strokeLinecap="round">
        <path d="M13 21v16" stroke="#d9501a" strokeWidth="9" />
        <path d="M12 8h12c14 0 12 16 0 16h-6" stroke="#ef6428" strokeWidth="9" />
        <path d="M15 24h9c8-1 9-7 6-11" stroke="#c64513" strokeWidth="5" />
      </g>
    ),
  },
  {
    name: 'TextEdit',
    art: (
      <g>
        <path d="M1 16l14 25 20-8L20 7z" fill="#f4dd4a" />
        <path d="M2 6l29-5 8 34-29 6z" fill="#f6f6f4" stroke="#ccc" />
        <path d="M6 10l6-1M7 14l21-4M8 17l21-4M9 20l21-4M9 23l21-4M10 26l21-4M11 29l12-3M12 35l8-2" stroke="#999" />
        <path d="M43 11L31 33l-4 7 1-9 12-20z" fill="#a8adb3" stroke="#666" />
      </g>
    ),
  },
  {
    name: 'Calendar',
    art: (
      <g>
        <path d="M6 12l33-6 4 28-32 7z" fill="#c4c4c4" />
        <path d="M3 9l33-5 5 30-31 6z" fill="#f4f4f4" stroke="#aaa" />
        <path d="M3 9l33-5 2 9L5 19z" fill="#b8403e" />
        <path d="M9 2v8M29 0v7" stroke="#999" strokeWidth="2" />
        <text x="6" y="17" fontSize="6" fontWeight="700" fill="#fff">APR</text>
        <text x="23" y="33" fontSize="18" fontWeight="700" textAnchor="middle" fill="#222" fontFamily="Liberation Sans, sans-serif">3</text>
      </g>
    ),
  },
  { name: 'Firefox', running: true, art: <FoxMark /> },
  { name: 'VMware Fusion', running: true, art: <FusionMark /> },
  {
    name: 'Alarm Clock',
    running: true,
    art: (
      <g>
        <path d="M12 34l-4 7M33 34l4 7" stroke="#888" strokeWidth="4" />
        <path d="M6 11C4 3 14-1 19 6zM38 11c2-8-8-12-13-5z" fill="#c5c7ca" stroke="#777" />
        <circle cx="22" cy="23" r="16" fill="#c9cbd0" />
        <circle cx="22" cy="23" r="14" fill="#2e62b8" stroke="#5a6478" />
        <text x="22" y="29" fontSize="15" fontWeight="700" textAnchor="middle" fill="#fff" fontFamily="Open Sans, sans-serif">42</text>
      </g>
    ),
  },
  {
    name: 'iTerm',
    running: true,
    art: (
      <g>
        <rect x="1" y="4" width="42" height="36" fill="#c3c3c3" />
        <rect x="1" y="7" width="42" height="30" fill="#1b1b1b" />
        <path d="M20 37L43 14v23z" fill="#3a3a3a" />
        <text x="4" y="20" fontSize="13" fontWeight="700" fill="#27d03c" fontFamily="Liberation Mono, monospace">$</text>
        <rect x="12" y="10" width="5" height="11" fill="#1fae33" />
      </g>
    ),
  },
  {
    name: 'Messages',
    badge: '37',
    running: true,
    art: (
      <g>
        <path d="M21 4c26 0 25 31 1 31-3 3-9 6-16 5 3-2 4-6 3-8C-5 22 3 4 21 4z" fill="#48a4ec" />
        <path d="M8 13c5-8 23-8 27 2-8-3-18-3-27-2z" fill="#94d0fa" />
        <path d="M30 21c15 0 17 16 7 19l3 4c-5 0-7-1-9-3-17-1-16-20-1-20z" fill="#e6edf3" />
        <path d="M23 31h3M29 31h3M35 31h3" stroke="#8ea8bd" strokeWidth="3" />
      </g>
    ),
  },
  {
    name: 'Adobe Reader',
    running: true,
    art: (
      <g>
        <rect x="1" y="2" width="42" height="40" fill="#a80f0c" />
        <rect x="4" y="5" width="38" height="36" fill="#d41a0e" />
        <path d="M1 2h40v2H3z" fill="#e8e2e0" />
        <path d="M9 36c-2-4 9-9 25-9 5 0 4 4 0 3-7-2-13-10-13-18 0-4 4-4 3 1-1 8-9 22-15 23z" fill="none" stroke="#fff" strokeWidth="2" />
      </g>
    ),
  },
  {
    name: 'Word',
    running: true,
    art: (
      <g fill="none" strokeLinecap="round" strokeLinejoin="round" strokeWidth="8">
        <path d="M7 9l7 27L25 17" stroke="#1e9fd6" />
        <path d="M24 16l7 20 6-25" stroke="#27b0e4" />
        <path d="M7 9l4 17M24 16l3 9" stroke="#5cc8f0" strokeWidth="4" />
      </g>
    ),
  },
];

const reflect = '[-webkit-box-reflect:below_-4px_linear-gradient(transparent_75%,#00000055)]';

function DockStacks() {
  const cell = clsx('relative flex h-11 w-[47px] items-start px-[2px]', reflect);
  return (
    <>
      <button type="button" aria-label="Documents" className={cell}>
        <svg className="block" viewBox="0 0 44 44">
          <path d="M6 4l22-2 6 12H6z" fill="#eee" stroke="#bbb" />
          <path d="M9 6h16M9 9h18" stroke="#aaa" />
          <path d="M1 13h13l3-3h9l3 3h12v26H2z" fill="url(#folderFill)" stroke="#7fa9c0" />
        </svg>
      </button>
      <button type="button" aria-label="Applications" className={cell}>
        <Folder><path d="M23 17L13 35M21 17l10 18M11 30h22" stroke="#6796b2" strokeWidth="3" fill="none" /></Folder>
      </button>
      <button type="button" aria-label="Downloads" className={cell}>
        <Folder>
          <circle cx="22" cy="25" r="11" fill="#6f9db8" />
          <path d="M20 16h4v6h4l-6 7-6-7h4zM18 30h8v4h-8z" fill="#b5d2e2" />
        </Folder>
      </button>
      <button type="button" aria-label="Ubuntu window" className={cell}>
        <svg className="block" viewBox="0 0 44 44">
          <rect x="1" y="8" width="42" height="28" fill="url(#ubuntuFill)" />
          <path d="M1 8h42v1H1z" fill="#ddd" />
          <rect x="8" y="13" width="14" height="10" fill="#e8dfdc" />
          <g transform="translate(27,27) scale(0.400)"><FusionMark /></g>
        </svg>
      </button>
      <button type="button" aria-label="Messages window" className={cell}>
        <svg className="block" viewBox="0 0 44 44">
          <rect x="4" y="1" width="37" height="42" fill="#f3f4f6" />
          <rect x="4" y="1" width="37" height="4" fill="#d0d0d0" />
          <path d="M7 7v34" stroke="#555" strokeWidth="3" strokeDasharray="3 2" />
          <path d="M10 8h5M10 13h5M10 18h4M10 23h5M10 28h4M10 33h5" stroke="#aaa" strokeWidth="2" />
          <rect x="20" y="8" width="16" height="26" fill="#dbe3ef" />
          <circle cx="35" cy="35" r="8" fill="#3f9ff0" />
          <ellipse cx="38" cy="38" rx="5" ry="4" fill="#edf3f8" />
        </svg>
      </button>
      <button type="button" aria-label="Outlook window" className={cell}>
        <svg className="block" viewBox="0 0 44 44">
          <rect x="1" y="9" width="42" height="26" fill="#eef1f4" />
          <rect x="1" y="9" width="42" height="5" fill="#c9cdd2" />
          <rect x="10" y="17" width="8" height="5" fill="#7ea2cc" />
          <rect x="10" y="25" width="32" height="6" fill="#b9cde4" />
          <path d="M3 17h5M3 20h5M3 23h5" stroke="#c8bb7a" />
          <ellipse cx="35" cy="36" rx="5" ry="6" fill="none" stroke="#f2c21a" strokeWidth="4" />
        </svg>
      </button>
      <button type="button" aria-label="Firefox window" className={cell}>
        <svg className="block" viewBox="0 0 44 44">
          <rect x="1" y="12" width="42" height="21" fill="#f7f7f7" />
          <rect x="1" y="12" width="42" height="3" fill="#aaa" />
          <path d="M4 18h12M4 21h8M4 24h9M4 27h7M20 18h20M20 21h16M20 24h19M20 27h10" stroke="#9a93ad" />
          <g transform="translate(27,27) scale(0.360)"><FoxMark /></g>
        </svg>
      </button>
      <button type="button" aria-label="Trash" className={cell}>
        <svg className="block" viewBox="0 0 44 44">
          <path d="M6 7l5 34c4 3 18 3 22 0l5-34z" fill="#8a8c8f" />
          <path d="M10 12l23 26M16 11l19 20M9 20l17 21M34 12L12 38M28 11L11 31M36 17L18 41M22 11v31" stroke="#3a3c3f" fill="none" />
          <ellipse cx="22" cy="7" rx="17" ry="5" fill="#666" stroke="#ddd" strokeWidth="2" />
          <path d="M9 8l6-4 6 2 6-3 8 4-4 4-9 1-9-1z" fill="#eee" />
        </svg>
      </button>
    </>
  );
}

function Dock() {
  return (
    <nav aria-label="Dock" className="relative h-16 overflow-hidden bg-[radial-gradient(circle_at_652px_6px,#b6c5c2_0_1px,transparent_5px),linear-gradient(to_right,#1d4259,#11303f_40%,#0c1820_65%,#07090c)]">
      <svg className="absolute inset-0 h-full w-full" viewBox="0 0 1280 64" preserveAspectRatio="none">
        <defs>
          <linearGradient id="shelf" x1="0" y1="0" x2="0" y2="1">
            <stop offset="0" stopColor="#848f9f" />
            <stop offset="0.400" stopColor="#a0a9c4" />
            <stop offset="1" stopColor="#d3daea" />
          </linearGradient>
          <linearGradient id="folderFill" x1="0" y1="0" x2="0" y2="1">
            <stop offset="0" stopColor="#a8cadc" />
            <stop offset="1" stopColor="#7faac3" />
          </linearGradient>
          <linearGradient id="finderLight" x1="0" y1="0" x2="0" y2="1">
            <stop offset="0" stopColor="#c3d2ea" />
            <stop offset="1" stopColor="#86a8dc" />
          </linearGradient>
          <linearGradient id="finderDark" x1="0" y1="0" x2="0" y2="1">
            <stop offset="0" stopColor="#7ea6de" />
            <stop offset="1" stopColor="#2a5fae" />
          </linearGradient>
          <radialGradient id="ubuntuFill" cx="0.700" cy="0.300" r="0.800">
            <stop offset="0" stopColor="#c98aa8" />
            <stop offset="1" stopColor="#3d0f26" />
          </radialGradient>
        </defs>
        <g fill="#8aa2ae">
          {[[31, 15], [81, 7], [9, 45], [265, 4], [376, 7], [415, 15], [470, 2], [506, 6], [594, 2], [680, 4], [782, 7], [906, 6], [965, 4], [1011, 6], [1115, 14], [1252, 12], [1266, 36], [1272, 8]].map(([x, y]) => (
            <circle key={x} cx={x} cy={y} r="1" />
          ))}
        </g>
        <path d="M41 27H1238L1258 61H22z" fill="url(#shelf)" />
        <path d="M41 27H160L90 61H22z" fill="#b7c9b5" opacity="0.500" />
        <path d="M850 30l8 26" stroke="#6d7688" />
        <path d="M22 60h1236v2H22z" fill="#fff" />
        <path d="M22 62h1236v2H22z" fill="#8b919c" />
      </svg>
      <div className="relative flex justify-center pt-2 pl-1">
        {dockApps.map((app) => (
          <button key={app.name} type="button" aria-label={app.name} className="relative flex h-14 w-[47px] items-start px-[2px]">
            <span className={clsx('block w-full', reflect)}>
              <svg className="block" viewBox="0 0 44 44">{app.art}</svg>
            </span>
            {app.badge && <Badge count={app.badge} />}
            {app.running && <span className="absolute bottom-0 left-[18px] h-[3px] w-3 rounded-sm bg-[#e8fbff] shadow-[0_0_4px_#9fe8ff]" />}
          </button>
        ))}
        <span className="w-[23px] shrink-0" />
        <DockStacks />
      </div>
    </nav>
  );
}

export default function App() {
  return (
    <div className="flex min-h-screen flex-col overflow-hidden bg-[#ece9d8] font-['Liberation_Sans',Arial,sans-serif] text-black">
      <MenuBar />
      <VmChrome />
      <TitleBar />
      <AppToolbar />
      <div className="flex flex-1 items-stretch">
        <StrategyTree />
        <div className="mr-px ml-[2px] w-[6px] border-x border-[#8c8a78] bg-[#ece9d8]" />
        <ChartPanel />
        <aside className="w-[22px] shrink-0 bg-[#f4f1e7] pl-[3px]">
          <button type="button" className="flex h-[54px] w-full items-center justify-center border border-r-0 border-[#aca899] bg-[#ece9d8] text-[11px] leading-none [writing-mode:vertical-rl]">
            Backtest
          </button>
        </aside>
      </div>
      <Taskbar />
      <Dock />
    </div>
  );
}
